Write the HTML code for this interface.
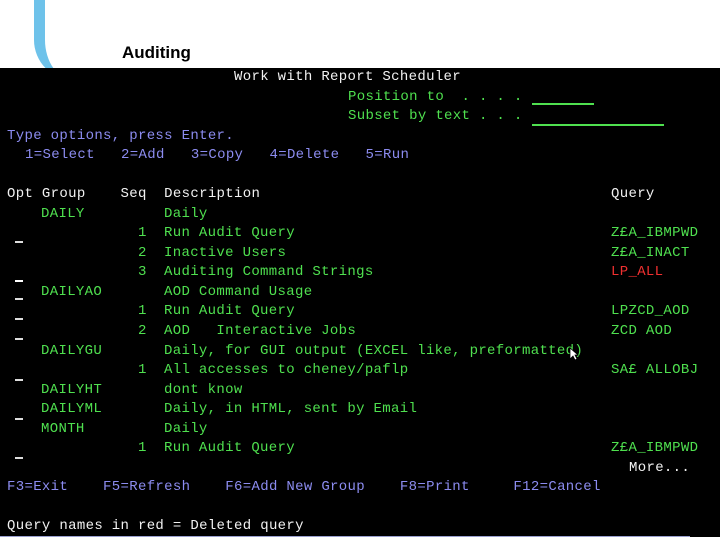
<!DOCTYPE html>
<html><head><meta charset="utf-8"><style>
body{margin:0;width:720px;height:540px;background:#fff;position:relative;overflow:hidden}
.scr{position:absolute;left:0;top:68px;width:720px;height:469px;background:#000}
.t{position:absolute;font-family:"Liberation Mono",monospace;font-size:14px;letter-spacing:0.33px;line-height:16px;white-space:pre;color:#4fe04f}
.w{color:#f2f2f2}.b{color:#8c8cf0}.r{color:#f03030}
.u{position:absolute;height:1.5px;background:#4fe04f}
.us{position:absolute;width:8px;height:1.5px;background:#ddd}
</style></head><body>
<div style="position:absolute;left:34px;top:-20px;width:60px;height:100px;border-left:11px solid #6ec2ea;border-bottom-left-radius:40px;box-sizing:border-box"></div>
<div style="position:absolute;left:122px;top:43px;font:bold 17px 'Liberation Sans',sans-serif;color:#000">Auditing</div>
<div class="scr"></div>
<div class="t w" style="left:234px;top:69px">Work with Report Scheduler</div>
<div class="t" style="left:348px;top:89px">Position to  . . . .</div>
<div class="u" style="left:532px;top:103px;width:62px"></div>
<div class="t" style="left:348px;top:108px">Subset by text . . .</div>
<div class="u" style="left:532px;top:124px;width:132px"></div>
<div class="t b" style="left:7px;top:128px">Type options, press Enter.</div>
<div class="t b" style="left:25px;top:147px">1=Select   2=Add   3=Copy   4=Delete   5=Run</div>
<div class="t w" style="left:7px;top:186px">Opt Group    Seq  Description</div>
<div class="t w" style="left:611px;top:186px">Query</div>
<div class="t" style="left:41px;top:206px">DAILY</div><div class="t" style="left:164px;top:206px">Daily</div>
<div class="t" style="left:138px;top:225px">1</div><div class="t" style="left:164px;top:225px">Run Audit Query</div><div class="t" style="left:611px;top:225px">Z£A_IBMPWD</div>
<div class="t" style="left:138px;top:245px">2</div><div class="t" style="left:164px;top:245px">Inactive Users</div><div class="t" style="left:611px;top:245px">Z£A_INACT</div>
<div class="t" style="left:138px;top:264px">3</div><div class="t" style="left:164px;top:264px">Auditing Command Strings</div><div class="t r" style="left:611px;top:264px">LP_ALL</div>
<div class="t" style="left:41px;top:284px">DAILYAO</div><div class="t" style="left:164px;top:284px">AOD Command Usage</div>
<div class="t" style="left:138px;top:303px">1</div><div class="t" style="left:164px;top:303px">Run Audit Query</div><div class="t" style="left:611px;top:303px">LPZCD_AOD</div>
<div class="t" style="left:138px;top:323px">2</div><div class="t" style="left:164px;top:323px">AOD   Interactive Jobs</div><div class="t" style="left:611px;top:323px">ZCD AOD</div>
<div class="t" style="left:41px;top:343px">DAILYGU</div><div class="t" style="left:164px;top:343px">Daily, for GUI output (EXCEL like, preformatted)</div>
<div class="t" style="left:138px;top:362px">1</div><div class="t" style="left:164px;top:362px">All accesses to cheney/paflp</div><div class="t" style="left:611px;top:362px">SA£ ALLOBJ</div>
<div class="t" style="left:41px;top:382px">DAILYHT</div><div class="t" style="left:164px;top:382px">dont know</div>
<div class="t" style="left:41px;top:401px">DAILYML</div><div class="t" style="left:164px;top:401px">Daily, in HTML, sent by Email</div>
<div class="t" style="left:41px;top:421px">MONTH</div><div class="t" style="left:164px;top:421px">Daily</div>
<div class="t" style="left:138px;top:440px">1</div><div class="t" style="left:164px;top:440px">Run Audit Query</div><div class="t" style="left:611px;top:440px">Z£A_IBMPWD</div>
<div class="t w" style="left:629px;top:460px">More...</div>
<div class="t b" style="left:7px;top:479px">F3=Exit    F5=Refresh    F6=Add New Group    F8=Print     F12=Cancel</div>
<div class="t w" style="left:7px;top:518px">Query names in red = Deleted query</div>
<div class="us" style="left:15px;top:241px"></div>
<div class="us" style="left:15px;top:280px;background:#fff"></div>
<div class="us" style="left:15px;top:298px"></div>
<div class="us" style="left:15px;top:318px"></div>
<div class="us" style="left:15px;top:338px"></div>
<div class="us" style="left:15px;top:379px"></div>
<div class="us" style="left:15px;top:418px"></div>
<div class="us" style="left:15px;top:457px"></div>
<div style="position:absolute;left:0;top:536px;width:690px;height:1px;background:#9aa0d0"></div>
<svg style="position:absolute;left:569px;top:347px" width="10" height="14"><path d="M1 1 L1 12 L4 9 L6 13 L8 12 L6 8 L9 8 Z" fill="#fff" stroke="#000" stroke-width="0.8"/></svg>
</body></html>
